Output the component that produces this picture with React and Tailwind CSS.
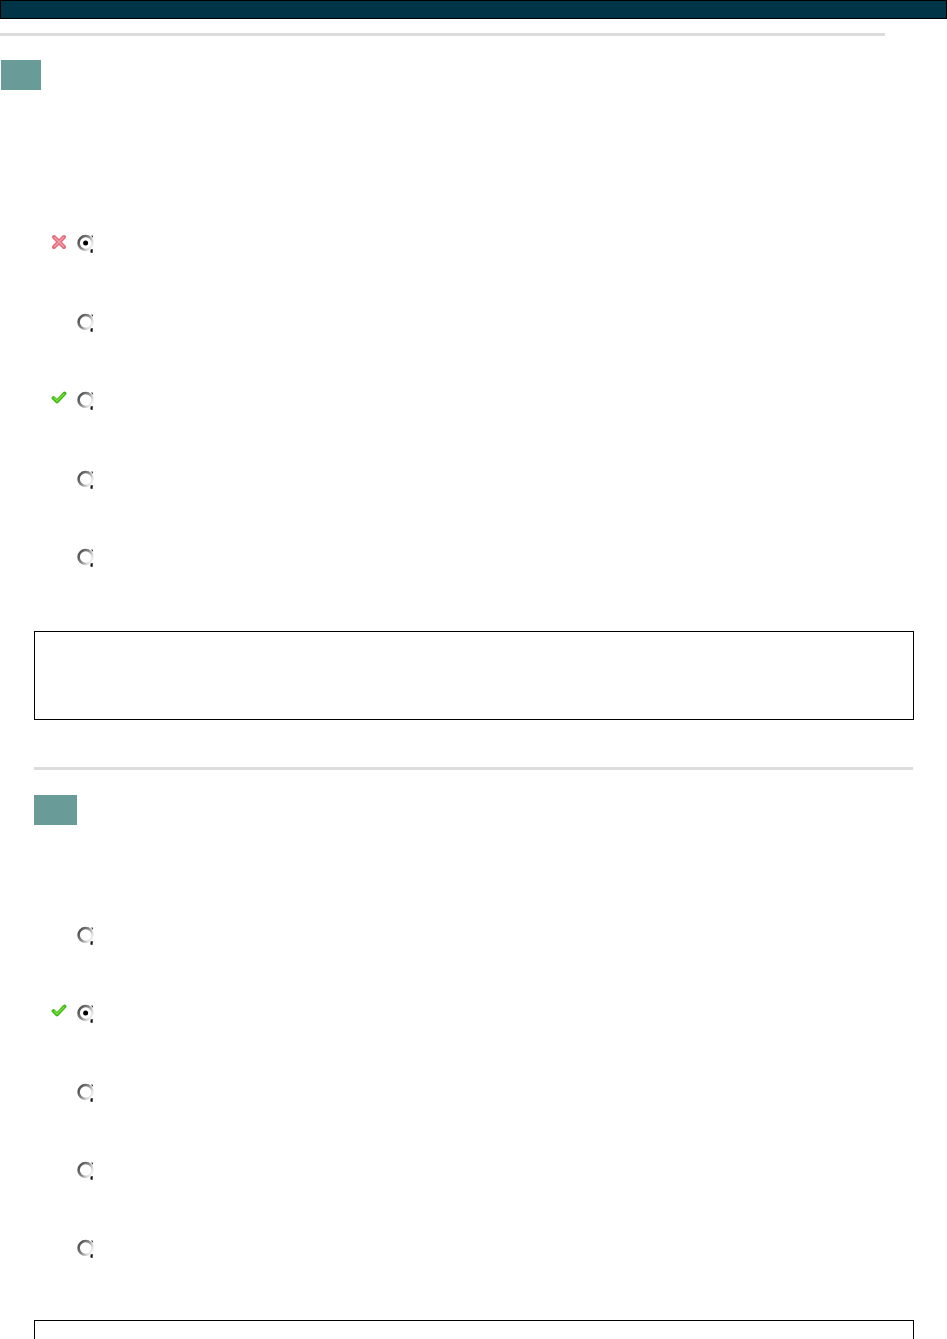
import React from 'react'

function Radio({ checked }) {
  return (
    <svg width="19" height="24" viewBox="0 0 19 24" className="block">
      <defs>
        <linearGradient id="ring" x1="0" y1="0.2" x2="1" y2="0.8">
          <stop offset="0" stopColor="#4c4c4c" />
          <stop offset="0.45" stopColor="#888" />
          <stop offset="0.8" stopColor="#dedede" />
          <stop offset="1" stopColor="#f6f6f6" />
        </linearGradient>
      </defs>
      <circle cx="8.6" cy="10" r="7" fill="#fff" stroke="url(#ring)" strokeWidth="2.6" />
      <path d="M14 2.6 L16 2.8 L15.8 4.8 Z" fill="#222" />
      <path d="M13.6 16.6 L15.8 16 L15.6 20 L13.4 19.6 Z" fill="#111" />
      {checked && <circle cx="8.6" cy="10" r="2.5" fill="#000" />}
    </svg>
  )
}

function Cross() {
  return (
    <svg width="16" height="16" viewBox="0 0 16 16" className="block">
      <path d="M3 3 L13 13 M13 3 L3 13" stroke="#e26a7a" strokeWidth="4" strokeLinecap="round" />
      <path d="M3.5 3.5 L12.5 12.5 M12.5 3.5 L3.5 12.5" stroke="#f3a0aa" strokeWidth="1.4" strokeLinecap="round" />
    </svg>
  )
}

function Check() {
  return (
    <svg width="16" height="14" viewBox="0 0 16 14" className="block">
      <path d="M2.5 7 L6 10.5 L13.5 2.5" fill="none" stroke="#3fb812" strokeWidth="3.8" strokeLinecap="round" strokeLinejoin="round" />
      <path d="M3 7 L6 10 L13 3" fill="none" stroke="#7be03a" strokeWidth="1.3" strokeLinecap="round" strokeLinejoin="round" />
    </svg>
  )
}

function Row({ mark, checked, h }) {
  return (
    <div className={`flex items-start pl-[51px] ${h}`}>
      <div className="w-[26px] h-[16px] -mt-[3px]">
        {mark === 'x' && <Cross />}
        {mark === 'ok' && <Check />}
      </div>
      <div className="-mt-[4px]">
        <Radio checked={checked} />
      </div>
    </div>
  )
}

const first = [
  { mark: 'x', checked: true },
  { mark: null, checked: false },
  { mark: 'ok', checked: false },
  { mark: null, checked: false },
  { mark: null, checked: false },
]

const second = [
  { mark: null, checked: false },
  { mark: 'ok', checked: true },
  { mark: null, checked: false },
  { mark: null, checked: false },
  { mark: null, checked: false },
]

export default function App() {
  return (
    <div className="w-[947px] h-[1339px] overflow-hidden bg-white font-['Liberation_Sans',Arial,sans-serif]">
      <div className="h-[19px] bg-[#003446] border border-black" />
      <div className="mt-[14px] h-[3px] w-[885px] bg-[#dcdcdc]" />
      <div className="mt-[24px] ml-[1px] w-[40px] h-[30px] bg-[#699b98]" />

      <div className="mt-[147px]">
        {first.map((r, i) => (
          <Row key={i} mark={r.mark} checked={r.checked} h="h-[78.5px]" />
        ))}
      </div>

      <div className="mt-[1.5px] ml-[34px] w-[880px] h-[89px] border border-black" />

      <div className="mt-[47px] ml-[34px] w-[879px] h-[3px] bg-[#dcdcdc]" />
      <div className="mt-[25px] ml-[34px] w-[43px] h-[30px] bg-[#699b98]" />

      <div className="mt-[104px]">
        {second.map((r, i) => (
          <Row key={i} mark={r.mark} checked={r.checked} h="h-[78.3px]" />
        ))}
      </div>

      <div className="ml-[34px] w-[880px] h-[40px] border border-black" />
    </div>
  )
}
